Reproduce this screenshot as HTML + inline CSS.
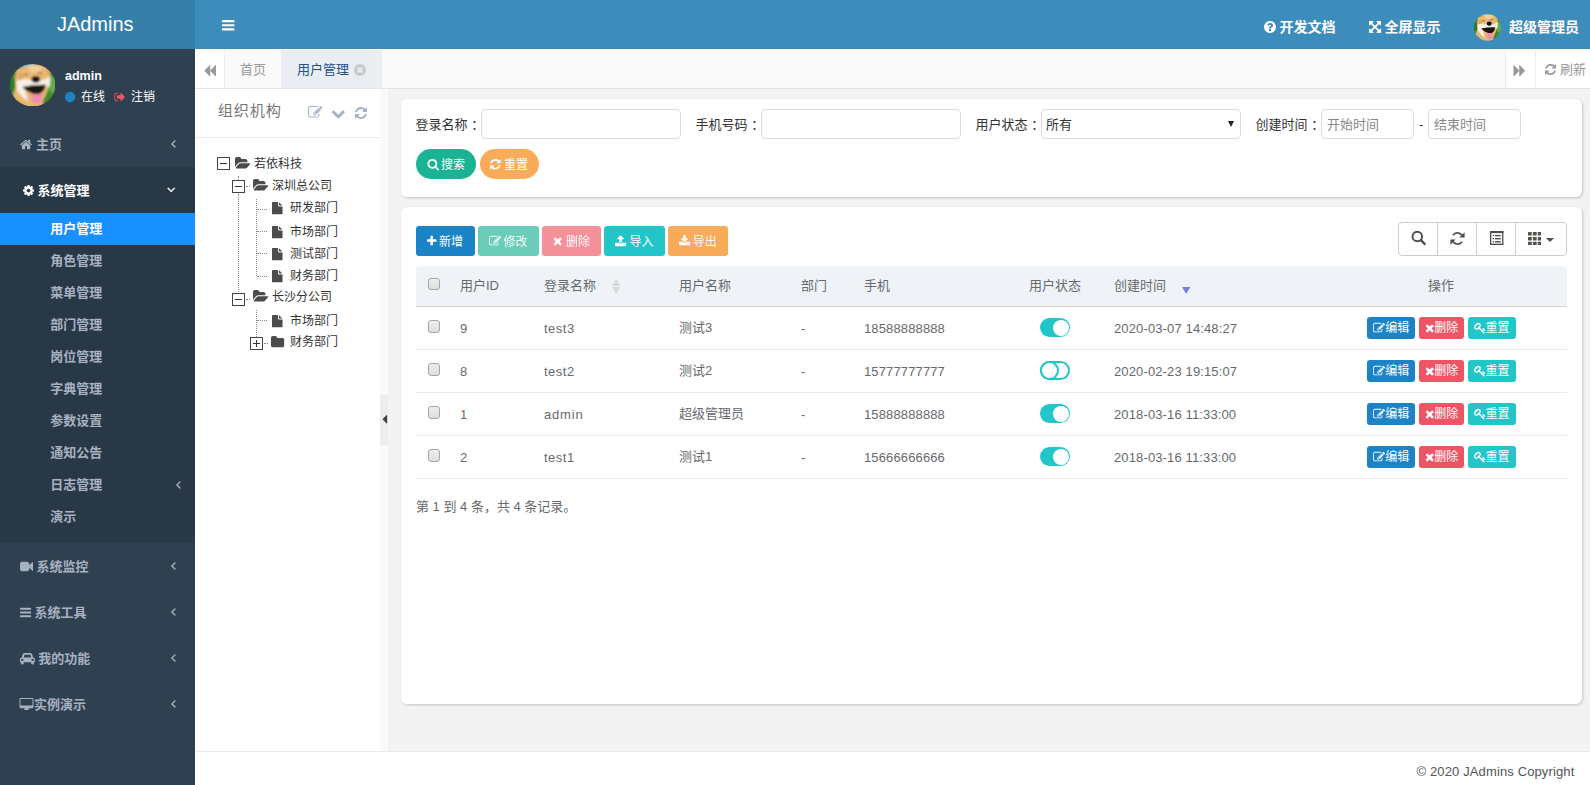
<!DOCTYPE html>
<html lang="zh-CN"><head><meta charset="utf-8"><title>JAdmins</title>
<style>
*{box-sizing:border-box;margin:0;padding:0}
html,body{width:1590px;height:785px;overflow:hidden;background:#f3f3f4}
body{font-family:"Liberation Sans","Noto Sans CJK SC",sans-serif;font-size:13px;color:#676a6c;position:relative}
.a{position:absolute}
.t{position:absolute;white-space:nowrap;line-height:20px;height:20px}
svg.i{display:block;position:absolute}
.b{font-weight:bold}
.n{letter-spacing:.13px;margin-top:.5px}
#side{left:0;top:0;width:195px;height:785px;background:#2f4050}
#logo{left:0;top:0;width:195px;padding-right:4.5px;height:49px;background:#367fa9;color:#fff;font-size:20px;line-height:49px;text-align:center}
#nav{left:195px;top:0;width:1395px;height:49px;background:#3c8dbc}
#tabs{left:195px;top:49px;width:1395px;height:40px;background:#fafafa;border-bottom:1px solid #e4e4e4}
#left{left:195px;top:89px;width:185px;height:662px;background:#fff}
#split{left:380px;top:89px;width:8px;height:662px;background:#fafafa}
#foot{left:195px;top:751px;width:1395px;height:34px;background:#fff;border-top:1px solid #e7eaec}
.card{background:#fff;border-radius:6px;box-shadow:1px 1px 3px rgba(0,0,0,.2)}
.inp{position:absolute;height:30px;border:1px solid #ddd;border-radius:4px;background:#fff}
.btn{position:absolute;height:30px;color:#fff;border-radius:3px}
.m1{color:#a7b1c2;font-weight:bold}
.m2{color:#a7b1c2;font-weight:bold}
.tree{color:#333;font-size:12px}
.cb{position:absolute;width:12.5px;height:12.5px;border:1px solid #a6a6a6;border-radius:3px;background:linear-gradient(#ededed,#dedede)}
.hline{position:absolute;height:1px;left:416px;width:1151px;background:#e7eaec}
.sw{position:absolute;width:30px;height:19px;border-radius:10px;background:#23c6c8}
.sw i{position:absolute;top:1.5px;right:1.5px;width:16px;height:16px;border-radius:50%;background:#fff}
.sw.off{background:#fff;border:2px solid #23c6c8}
.sw.off i{left:-2px;top:-2px;width:19px;height:19px;background:#fff;border:2px solid #23c6c8}
.ab{position:absolute;height:22px;border-radius:3px;color:#fff;font-size:12px}
.dot{position:absolute;border:0 dotted #8a8a8a}
.pm{position:absolute;width:13px;height:13px;border:1px solid #444;background:#fff}
.pm:before{content:"";position:absolute;left:2px;top:5px;width:7px;height:1px;background:#333}
.pm.plus:after{content:"";position:absolute;left:5px;top:2px;width:1px;height:7px;background:#333}
</style></head>
<body>
<div class="a" id="side"></div>
<div class="a" id="logo">JAdmins</div>
<svg class="i" style="left:9.8px;top:63.6px" width="45.4" height="42.4" viewBox="0 0 660 610" preserveAspectRatio="none"><defs><clipPath id="c32"><ellipse cx="330" cy="305" rx="330" ry="305"/></clipPath><filter id="f32" x="-5%" y="-5%" width="110%" height="110%"><feGaussianBlur stdDeviation="13"/></filter></defs><g clip-path="url(#c32)"><g filter="url(#f32)"><rect x="-40" y="-40" width="740" height="690" fill="#3f8a2c"/><ellipse cx="620" cy="300" rx="60" ry="120" fill="#5fae48"/><ellipse cx="40" cy="300" rx="50" ry="110" fill="#2f7a22"/><rect x="130" y="-20" width="230" height="60" fill="#86bdea"/><path d="M90 115 L108 70 L150 62 L250 25 L400 8 L500 28 L548 58 L572 98 L588 200 L578 300 L525 430 L482 520 L470 640 L150 640 L40 480 L80 330 L74 200z" fill="#e9b873"/><path d="M250 30 L400 12 L480 40 L430 110 L300 120z" fill="#f2cf98"/><path d="M88 250 Q180 195 300 230 Q380 250 470 235 Q540 205 584 180 L580 310 Q545 350 470 335 L210 335 Q235 430 262 540 Q170 480 105 380z" fill="#f6f0e6"/><ellipse cx="150" cy="180" rx="40" ry="50" fill="#dfa75c"/><ellipse cx="560" cy="120" rx="30" ry="40" fill="#dfa75c"/><path d="M100 500 L200 600 L120 640 L40 560z" fill="#d9a055"/><path d="M178 332 Q330 296 522 300 Q505 420 400 442 Q262 424 178 332z" fill="#1f1311"/><path d="M305 447 Q390 424 470 440 L466 520 Q450 582 390 577 Q330 570 320 520z" fill="#f08dab"/><ellipse cx="375" cy="220" rx="62" ry="48" fill="#17100f"/><path d="M200 160 q32 -22 62 0" stroke="#4a3220" stroke-width="14" fill="none"/><path d="M405 135 q32 -22 62 0" stroke="#4a3220" stroke-width="14" fill="none"/></g></g></svg>
<div class="t b" style="left:65px;top:65.5px;color:#fff;font-size:12.5px">admin</div>
<svg class="i" width="10.29" height="12.00" viewBox="0 0 1536 1792" style="left:64.6px;top:90.5px;overflow:visible"><path fill="#1c84c6" d="M1536 896q0 209-103 385.500t-279.500 279.500-385.500 103-385.500-103-279.500-279.500-103-385.500 103-385.500 279.500-279.500 385.500-103 385.500 103 279.500 279.500 103 385.500z"/></svg>
<div class="t " style="left:81px;top:87px;color:#fff;font-size:12px">在线</div>
<svg class="i" width="11.14" height="12.00" viewBox="0 0 1664 1792" style="left:113.8px;top:90.5px;overflow:visible"><path fill="#ed5565" d="M704 1440q0 4 1 20t.5 26.500-3 23.500-10 19.500-20.500 6.500h-320q-119 0-203.500-84.500t-84.500-203.500v-704q0-119 84.500-203.500t203.500-84.500h320q13 0 22.500 9.500t9.500 22.500q0 4 1 20t.5 26.500-3 23.500-10 19.500-20.500 6.500h-320q-66 0-113 47t-47 113v704q0 66 47 113t113 47h312l11.500 1 11.500 3 8 5.500 7 9 2 13.500zm928-544q0 26-19 45l-544 544q-19 19-45 19t-45-19-19-45v-288h-448q-26 0-45-19t-19-45v-384q0-26 19-45t45-19h448v-288q0-26 19-45t45-19 45 19l544 544q19 19 19 45z"/></svg>
<div class="t " style="left:131px;top:87px;color:#fff;font-size:12px">注销</div>
<div class="a" style="left:0;top:167px;width:195px;height:376px;background:#293846"></div>
<div class="a" style="left:0;top:213px;width:195px;height:32px;background:#1890ff"></div>
<svg class="i" width="12.07" height="13.00" viewBox="0 0 1664 1792" style="left:20px;top:137.5px;overflow:visible"><path fill="#a7b1c2" d="M1408 992v480q0 26-19 45t-45 19h-384v-384h-256v384h-384q-26 0-45-19t-19-45v-480q0-1 .5-3t.5-3l575-474 575 474q1 2 1 6zm223-69l-62 74q-8 9-21 11h-3q-13 0-21-7l-692-577-692 577q-12 8-24 7-13-2-21-11l-62-74q-8-10-7-23.500t11-21.500l719-599q32-26 76-26t76 26l244 204v-195q0-14 9-23t23-9h192q14 0 23 9t9 23v408l219 182q10 8 11 21.500t-7 23.500z"/></svg>
<div class="t m1" style="left:36px;top:134.8px;">主页</div>
<svg class="i" width="4.64" height="13.00" viewBox="0 0 640 1792" style="left:170.6px;top:136.5px;overflow:visible;stroke:#a7b1c2;stroke-width:70"><path fill="#a7b1c2" d="M627 544q0 13-10 23l-393 393 393 393q10 10 10 23t-10 23l-50 50q-10 10-23 10t-23-10l-466-466q-10-10-10-23t10-23l466-466q10-10 23-10t23 10l50 50q10 10 10 23z"/></svg>
<svg class="i" width="11.14" height="13.00" viewBox="0 0 1536 1792" style="left:23px;top:183.5px;overflow:visible"><path fill="#fff" d="M1024 896q0-106-75-181t-181-75-181 75-75 181 75 181 181 75 181-75 75-181zm512-109v222q0 12-8 23t-20 13l-185 28q-19 54-39 91 35 50 107 138 10 12 10 25t-9 23q-27 37-99 108t-94 71q-12 0-26-9l-138-108q-44 23-91 38-16 136-29 186-7 28-36 28h-222q-14 0-24.500-8.500t-11.500-21.500l-28-184q-49-16-90-37l-141 107q-10 9-25 9-14 0-25-11-126-114-165-168-7-10-7-23 0-12 8-23 15-21 51-66.500t54-70.500q-27-50-41-99l-183-27q-13-2-21-12.500t-8-23.500v-222q0-12 8-23t19-13l186-28q14-46 39-92-40-57-107-138-10-12-10-24 0-10 9-23 26-36 98.500-107.500t94.500-71.500q13 0 26 10l138 107q44-23 91-38 16-136 29-186 7-28 36-28h222q14 0 24.500 8.500t11.500 21.500l28 184q49 16 90 37l142-107q9-9 24-9 13 0 25 10 129 119 165 170 7 8 7 22 0 12-8 23-15 21-51 66.500t-54 70.500q26 50 41 98l183 28q13 2 21 12.500t8 23.500z"/></svg>
<div class="t m1" style="left:37.5px;top:180.9px;color:#fff">系统管理</div>
<svg class="i" width="8.36" height="13.00" viewBox="0 0 1152 1792" style="left:167px;top:182.5px;overflow:visible;stroke:#fff;stroke-width:70"><path fill="#fff" d="M1075 736q0 13-10 23l-466 466q-10 10-23 10t-23-10l-466-466q-10-10-10-23t10-23l50-50q10-10 23-10t23 10l393 393 393-393q10-10 23-10t23 10l50 50q10 10 10 23z"/></svg>
<div class="t m2" style="left:50.3px;top:219.1px;color:#fff">用户管理</div>
<div class="t m2" style="left:50.3px;top:251.1px;">角色管理</div>
<div class="t m2" style="left:50.3px;top:283.1px;">菜单管理</div>
<div class="t m2" style="left:50.3px;top:315.1px;">部门管理</div>
<div class="t m2" style="left:50.3px;top:347.1px;">岗位管理</div>
<div class="t m2" style="left:50.3px;top:379.1px;">字典管理</div>
<div class="t m2" style="left:50.3px;top:411.1px;">参数设置</div>
<div class="t m2" style="left:50.3px;top:443.1px;">通知公告</div>
<div class="t m2" style="left:50.3px;top:475.1px;">日志管理</div>
<div class="t m2" style="left:50.3px;top:507.1px;">演示</div>
<svg class="i" width="4.64" height="13.00" viewBox="0 0 640 1792" style="left:175.5px;top:477.5px;overflow:visible;stroke:#a7b1c2;stroke-width:70"><path fill="#a7b1c2" d="M627 544q0 13-10 23l-393 393 393 393q10 10 10 23t-10 23l-50 50q-10 10-23 10t-23-10l-466-466q-10-10-10-23t10-23l466-466q10-10 23-10t23 10l50 50q10 10 10 23z"/></svg>
<svg class="i" width="13.00" height="13.00" viewBox="0 0 1792 1792" style="left:20px;top:559.5px;overflow:visible"><path fill="#a7b1c2" d="M1792 352v1088q0 42-39 59-13 5-25 5-27 0-45-19l-403-403v166q0 119-84.500 203.500t-203.500 84.500h-704q-119 0-203.500-84.500t-84.500-203.500v-704q0-119 84.500-203.500t203.500-84.500h704q119 0 203.500 84.500t84.500 203.500v165l403-402q18-19 45-19 12 0 25 5 39 17 39 59z"/></svg>
<div class="t m1" style="left:36.5px;top:556.8px;">系统监控</div>
<svg class="i" width="4.64" height="13.00" viewBox="0 0 640 1792" style="left:170.6px;top:558.5px;overflow:visible;stroke:#a7b1c2;stroke-width:70"><path fill="#a7b1c2" d="M627 544q0 13-10 23l-393 393 393 393q10 10 10 23t-10 23l-50 50q-10 10-23 10t-23-10l-466-466q-10-10-10-23t10-23l466-466q10-10 23-10t23 10l50 50q10 10 10 23z"/></svg>
<svg class="i" width="11.14" height="13.00" viewBox="0 0 1536 1792" style="left:20px;top:605.5px;overflow:visible"><path fill="#a7b1c2" d="M1536 1344v128q0 26-19 45t-45 19h-1408q-26 0-45-19t-19-45v-128q0-26 19-45t45-19h1408q26 0 45 19t19 45zm0-512v128q0 26-19 45t-45 19h-1408q-26 0-45-19t-19-45v-128q0-26 19-45t45-19h1408q26 0 45 19t19 45zm0-512v128q0 26-19 45t-45 19h-1408q-26 0-45-19t-19-45v-128q0-26 19-45t45-19h1408q26 0 45 19t19 45z"/></svg>
<div class="t m1" style="left:34.4px;top:602.8px;">系统工具</div>
<svg class="i" width="4.64" height="13.00" viewBox="0 0 640 1792" style="left:170.6px;top:604.5px;overflow:visible;stroke:#a7b1c2;stroke-width:70"><path fill="#a7b1c2" d="M627 544q0 13-10 23l-393 393 393 393q10 10 10 23t-10 23l-50 50q-10 10-23 10t-23-10l-466-466q-10-10-10-23t10-23l466-466q10-10 23-10t23 10l50 50q10 10 10 23z"/></svg>
<svg class="i" width="14.86" height="13.00" viewBox="0 0 2048 1792" style="left:20px;top:651.5px;overflow:visible"><path fill="#a7b1c2" d="M480 1088q0-66-47-113t-113-47-113 47-47 113 47 113 113 47 113-47 47-113zm36-320h1016l-89-357q-2-8-14-17.500t-21-9.500h-768q-9 0-21 9.500t-14 17.500zm1372 320q0-66-47-113t-113-47-113 47-47 113 47 113 113 47 113-47 47-113zm160-96v384q0 14-9 23t-23 9h-96v128q0 80-56 136t-136 56-136-56-56-136v-128h-1024v128q0 80-56 136t-136 56-136-56-56-136v-128h-96q-14 0-23-9t-9-23v-384q0-93 65.500-158.500t158.500-65.500h28l105-419q23-94 104-157.500t179-63.500h768q98 0 179 63.500t104 157.500l105 419h28q93 0 158.500 65.500t65.500 158.500z"/></svg>
<div class="t m1" style="left:38.3px;top:648.8px;">我的功能</div>
<svg class="i" width="4.64" height="13.00" viewBox="0 0 640 1792" style="left:170.6px;top:650.5px;overflow:visible;stroke:#a7b1c2;stroke-width:70"><path fill="#a7b1c2" d="M627 544q0 13-10 23l-393 393 393 393q10 10 10 23t-10 23l-50 50q-10 10-23 10t-23-10l-466-466q-10-10-10-23t10-23l466-466q10-10 23-10t23 10l50 50q10 10 10 23z"/></svg>
<svg class="i" width="13.93" height="13.00" viewBox="0 0 1920 1792" style="left:20px;top:697.5px;overflow:visible"><path fill="#a7b1c2" d="M1728 992v-832q0-13-9.500-22.500t-22.500-9.500h-1600q-13 0-22.500 9.500t-9.500 22.500v832q0 13 9.500 22.500t22.500 9.500h1600q13 0 22.500-9.500t9.500-22.500zm128-832v1088q0 66-47 113t-113 47h-544q0 37 16 77.500t32 71 16 43.500q0 26-19 45t-45 19h-512q-26 0-45-19t-19-45q0-14 16-44t32-70 16-78h-544q-66 0-113-47t-47-113v-1088q0-66 47-113t113-47h1600q66 0 113 47t47 113z"/></svg>
<div class="t m1" style="left:33.9px;top:694.8px;">实例演示</div>
<svg class="i" width="4.64" height="13.00" viewBox="0 0 640 1792" style="left:170.6px;top:696.5px;overflow:visible;stroke:#a7b1c2;stroke-width:70"><path fill="#a7b1c2" d="M627 544q0 13-10 23l-393 393 393 393q10 10 10 23t-10 23l-50 50q-10 10-23 10t-23-10l-466-466q-10-10-10-23t10-23l466-466q10-10 23-10t23 10l50 50q10 10 10 23z"/></svg>
<div class="a" id="nav"></div>
<svg class="i" width="12.43" height="14.50" viewBox="0 0 1536 1792" style="left:221.5px;top:18.25px;overflow:visible"><path fill="#fff" d="M1536 1344v128q0 26-19 45t-45 19h-1408q-26 0-45-19t-19-45v-128q0-26 19-45t45-19h1408q26 0 45 19t19 45zm0-512v128q0 26-19 45t-45 19h-1408q-26 0-45-19t-19-45v-128q0-26 19-45t45-19h1408q26 0 45 19t19 45zm0-512v128q0 26-19 45t-45 19h-1408q-26 0-45-19t-19-45v-128q0-26 19-45t45-19h1408q26 0 45 19t19 45z"/></svg>
<svg class="i" width="12.00" height="14.00" viewBox="0 0 1536 1792" style="left:1264px;top:20px;overflow:visible"><path fill="#fff" d="M896 1376v-192q0-14-9-23t-23-9h-192q-14 0-23 9t-9 23v192q0 14 9 23t23 9h192q14 0 23-9t9-23zm256-672q0-88-55.500-163t-138.500-116-170-41q-243 0-371 213-15 24 8 42l132 100q7 6 19 6 16 0 25-12 53-68 86-92 34-24 86-24 48 0 85.500 26t37.500 59q0 38-20 61t-68 45q-63 28-115.500 86.500t-52.500 125.500v36q0 14 9 23t23 9h192q14 0 23-9t9-23q0-19 21.500-49.500t54.500-49.500q32-18 49-28.500t46-35 44.500-48 28-60.500 12.500-81zm384 192q0 209-103 385.500t-279.500 279.500-385.500 103-385.500-103-279.500-279.500-103-385.500 103-385.500 279.500-279.500 385.500-103 385.500 103 279.500 279.500 103 385.500z"/></svg>
<div class="t b" style="left:1279.5px;top:16.7px;color:#fff;font-size:14px">开发文档</div>
<svg class="i" width="14.00" height="14.00" viewBox="0 0 1792 1792" style="left:1367.8px;top:20px;overflow:visible"><path fill="#fff" d="M1411 541l-355 355 355 355 144-144q29-31 70-14 39 17 39 59v448q0 26-19 45t-45 19h-448q-42 0-59-40-17-39 14-69l144-144-355-355-355 355 144 144q31 30 14 69-17 40-59 40h-448q-26 0-45-19t-19-45v-448q0-42 40-59 39-17 69 14l144 144 355-355-355-355-144 144q-19 19-45 19-12 0-24-5-40-17-40-59v-448q0-26 19-45t45-19h448q42 0 59 40 17 39-14 69l-144 144 355 355 355-355-144-144q-31-30-14-69 17-40 59-40h448q26 0 45 19t19 45v448q0 42-39 59-13 5-25 5-26 0-45-19z"/></svg>
<div class="t b" style="left:1384.5px;top:16.7px;color:#fff;font-size:14px">全屏显示</div>
<svg class="i" style="left:1473.9px;top:13.9px" width="26.8" height="26.8" viewBox="0 0 660 610" preserveAspectRatio="none"><defs><clipPath id="c1487"><ellipse cx="330" cy="305" rx="330" ry="305"/></clipPath><filter id="f1487" x="-5%" y="-5%" width="110%" height="110%"><feGaussianBlur stdDeviation="13"/></filter></defs><g clip-path="url(#c1487)"><g filter="url(#f1487)"><rect x="-40" y="-40" width="740" height="690" fill="#3f8a2c"/><ellipse cx="620" cy="300" rx="60" ry="120" fill="#5fae48"/><ellipse cx="40" cy="300" rx="50" ry="110" fill="#2f7a22"/><rect x="130" y="-20" width="230" height="60" fill="#86bdea"/><path d="M90 115 L108 70 L150 62 L250 25 L400 8 L500 28 L548 58 L572 98 L588 200 L578 300 L525 430 L482 520 L470 640 L150 640 L40 480 L80 330 L74 200z" fill="#e9b873"/><path d="M250 30 L400 12 L480 40 L430 110 L300 120z" fill="#f2cf98"/><path d="M88 250 Q180 195 300 230 Q380 250 470 235 Q540 205 584 180 L580 310 Q545 350 470 335 L210 335 Q235 430 262 540 Q170 480 105 380z" fill="#f6f0e6"/><ellipse cx="150" cy="180" rx="40" ry="50" fill="#dfa75c"/><ellipse cx="560" cy="120" rx="30" ry="40" fill="#dfa75c"/><path d="M100 500 L200 600 L120 640 L40 560z" fill="#d9a055"/><path d="M178 332 Q330 296 522 300 Q505 420 400 442 Q262 424 178 332z" fill="#1f1311"/><path d="M305 447 Q390 424 470 440 L466 520 Q450 582 390 577 Q330 570 320 520z" fill="#f08dab"/><ellipse cx="375" cy="220" rx="62" ry="48" fill="#17100f"/><path d="M200 160 q32 -22 62 0" stroke="#4a3220" stroke-width="14" fill="none"/><path d="M405 135 q32 -22 62 0" stroke="#4a3220" stroke-width="14" fill="none"/></g></g></svg>
<div class="t b" style="left:1509px;top:16.7px;color:#fff;font-size:14px">超级管理员</div>
<div class="a" id="tabs"></div>
<div class="a" style="left:195px;top:49px;width:29px;height:39px;background:#fff"></div>
<div class="a" style="left:1505px;top:49px;width:85px;height:39px;background:#fff"></div>
<div class="a" style="left:224px;top:50px;width:1px;height:38px;background:#eee"></div>
<svg class="i" width="13.50" height="13.50" viewBox="0 0 1792 1792" style="left:203.3px;top:63.65px;overflow:visible"><path fill="#999" d="M1683 141q19-19 32-13t13 32v1472q0 26-13 32t-32-13l-710-710q-9-9-13-19v710q0 26-13 32t-32-13l-710-710q-19-19-19-45t19-45l710-710q19-19 32-13t13 32v710q4-10 13-19z"/></svg>
<div class="t " style="left:240px;top:60px;color:#999">首页</div>
<div class="a" style="left:281px;top:50px;width:101px;height:38px;background:#eaedf1"></div>
<div class="t " style="left:297px;top:60px;color:#23508e">用户管理</div>
<svg class="i" width="12.00" height="14.00" viewBox="0 0 1536 1792" style="left:354px;top:62.5px;overflow:visible"><path fill="#c8c8c8" d="M1149 1122q0-26-19-45l-181-181 181-181q19-19 19-45 0-27-19-46l-90-90q-19-19-46-19-26 0-45 19l-181 181-181-181q-19-19-45-19-27 0-46 19l-90 90q-19 19-19 46 0 26 19 45l181 181-181 181q-19 19-19 45 0 27 19 46l90 90q19 19 46 19 26 0 45-19l181-181 181 181q19 19 45 19 27 0 46-19l90-90q19-19 19-46zm387-226q0 209-103 385.500t-279.500 279.500-385.500 103-385.500-103-279.500-279.500-103-385.500 103-385.500 279.500-279.500 385.500-103 385.500 103 279.500 279.500 103 385.500z"/></svg>
<div class="a" style="left:1505px;top:50px;width:1px;height:38px;background:#eee"></div>
<div class="a" style="left:1535px;top:50px;width:1px;height:38px;background:#eee"></div>
<svg class="i" width="13.50" height="13.50" viewBox="0 0 1792 1792" style="left:1513.4px;top:63.55px;overflow:visible"><path fill="#999" d="M109 1651q-19 19-32 13t-13-32v-1472q0-26 13-32t32 13l710 710q9 9 13 19v-710q0-26 13-32t32 13l710 710q19 19 19 45t-19 45l-710 710q-19 19-32 13t-13-32v-710q-4 10-13 19z"/></svg>
<svg class="i" width="11.14" height="13.00" viewBox="0 0 1536 1792" style="left:1545px;top:63px;overflow:visible"><path fill="#999" d="M1511 1056q0 5-1 7-64 268-268 434.500t-478 166.500q-146 0-282.500-55t-243.500-157l-129 129q-19 19-45 19t-45-19-19-45v-448q0-26 19-45t45-19h448q26 0 45 19t19 45-19 45l-137 137q71 66 161 102t187 36q134 0 250-65t186-179q11-17 53-117 8-23 30-23h192q13 0 22.500 9.500t9.500 22.500zm25-800v448q0 26-19 45t-45 19h-448q-26 0-45-19t-19-45 19-45l138-138q-148-137-349-137-134 0-250 65t-186 179q-11 17-53 117-8 23-30 23h-199q-13 0-22.500-9.500t-9.500-22.500v-7q65-268 270-434.500t480-166.500q146 0 284 55.500t245 156.500l130-129q19-19 45-19t45 19 19 45z"/></svg>
<div class="t " style="left:1560px;top:60px;color:#999">刷新</div>
<div class="a" id="left"></div>
<div class="a" id="split"></div>
<div class="a" style="left:380px;top:395px;width:8px;height:50px;background:#ededed"></div>
<svg class="i" width="5.18" height="14.50" viewBox="0 0 640 1792" style="left:381.6px;top:412.25px;overflow:visible"><path fill="#444" d="M640 448v896q0 26-19 45t-45 19-45-19l-448-448q-19-19-19-45t19-45l448-448q19-19 45-19t45 19 19 45z"/></svg>
<div class="t " style="left:217.7px;top:101.4px;font-size:15.2px;letter-spacing:.8px;color:#777">组织机构</div>
<svg class="i" width="14.50" height="14.50" viewBox="0 0 1792 1792" style="left:308px;top:105.25px;overflow:visible"><path fill="#a7b1c2" d="M888 1184l116-116-152-152-116 116v56h96v96h56zm440-720q-16-16-33 1l-350 350q-17 17-1 33t33-1l350-350q17-17 1-33zm80 594v190q0 119-84.500 203.500t-203.500 84.500h-832q-119 0-203.500-84.500t-84.500-203.500v-832q0-119 84.500-203.500t203.500-84.500h832q63 0 117 25 15 7 18 23 3 17-9 29l-49 49q-14 14-32 8-23-6-45-6h-832q-66 0-113 47t-47 113v832q0 66 47 113t113 47h832q66 0 113-47t47-113v-126q0-13 9-22l64-64q15-15 35-7t20 29zm-96-738l288 288-672 672h-288v-288zm444 132l-92 92-288-288 92-92q28-28 68-28t68 28l152 152q28 28 28 68t-28 68z"/></svg>
<svg class="i" width="14.50" height="14.50" viewBox="0 0 1792 1792" style="left:331px;top:105.95px;overflow:visible"><path fill="#a7b1c2" d="M1683 808l-742 741q-19 19-45 19t-45-19l-742-741q-19-19-19-45.500t19-45.500l166-165q19-19 45-19t45 19l531 531 531-531q19-19 45-19t45 19l166 165q19 19 19 45.500t-19 45.500z"/></svg>
<svg class="i" width="12.00" height="14.00" viewBox="0 0 1536 1792" style="left:355px;top:105.5px;overflow:visible"><path fill="#a7b1c2" d="M1511 1056q0 5-1 7-64 268-268 434.500t-478 166.500q-146 0-282.500-55t-243.500-157l-129 129q-19 19-45 19t-45-19-19-45v-448q0-26 19-45t45-19h448q26 0 45 19t19 45-19 45l-137 137q71 66 161 102t187 36q134 0 250-65t186-179q11-17 53-117 8-23 30-23h192q13 0 22.500 9.500t9.500 22.500zm25-800v448q0 26-19 45t-45 19h-448q-26 0-45-19t-19-45 19-45l138-138q-148-137-349-137-134 0-250 65t-186 179q-11 17-53 117-8 23-30 23h-199q-13 0-22.500-9.500t-9.500-22.500v-7q65-268 270-434.500t480-166.500q146 0 284 55.500t245 156.500l130-129q19-19 45-19t45 19 19 45z"/></svg>
<div class="a" style="left:195px;top:137px;width:185px;height:1px;background:#e7eaec"></div>
<div class="dot" style="left:238px;top:176px;width:0;height:4px;border-left-width:1px"></div>
<div class="dot" style="left:238px;top:194px;width:0;height:98px;border-left-width:1px"></div>
<div class="dot" style="left:246px;top:186px;width:4px;height:0;border-top-width:1px"></div>
<div class="dot" style="left:246px;top:299px;width:4px;height:0;border-top-width:1px"></div>
<div class="dot" style="left:256px;top:199px;width:0;height:77px;border-left-width:1px"></div>
<div class="dot" style="left:256px;top:310px;width:0;height:27px;border-left-width:1px"></div>
<div class="dot" style="left:257px;top:209px;width:10px;height:0;border-top-width:1px"></div>
<div class="dot" style="left:257px;top:231px;width:10px;height:0;border-top-width:1px"></div>
<div class="dot" style="left:257px;top:253px;width:10px;height:0;border-top-width:1px"></div>
<div class="dot" style="left:257px;top:276px;width:10px;height:0;border-top-width:1px"></div>
<div class="dot" style="left:257px;top:320px;width:10px;height:0;border-top-width:1px"></div>
<div class="dot" style="left:264px;top:343px;width:4px;height:0;border-top-width:1px"></div>
<div class="pm" style="left:217px;top:157px"></div>
<svg class="i" width="15.54" height="14.50" viewBox="0 0 1920 1792" style="left:234.8px;top:156.15px;overflow:visible"><path fill="#4c4c4c" d="M1879 952q0 31-31 66l-336 396q-43 51-120.500 86.500t-143.500 35.500h-1088q-34 0-60.500-13t-26.500-43q0-31 31-66l336-396q43-51 120.500-86.500t143.500-35.500h1088q34 0 60.500 13t26.500 43zm-343-344v160h-832q-94 0-197 47.500t-164 119.500l-337 396-5 6q0-4-.5-12.500t-.5-12.500v-960q0-92 66-158t158-66h320q92 0 158 66t66 158v32h544q92 0 158 66t66 158z"/></svg>
<div class="t tree" style="left:254px;top:154.4px;">若依科技</div>
<div class="pm" style="left:232px;top:180px"></div>
<svg class="i" width="15.54" height="14.50" viewBox="0 0 1920 1792" style="left:252.7px;top:178.15px;overflow:visible"><path fill="#4c4c4c" d="M1879 952q0 31-31 66l-336 396q-43 51-120.500 86.500t-143.500 35.500h-1088q-34 0-60.500-13t-26.500-43q0-31 31-66l336-396q43-51 120.500-86.500t143.500-35.500h1088q34 0 60.500 13t26.500 43zm-343-344v160h-832q-94 0-197 47.500t-164 119.500l-337 396-5 6q0-4-.5-12.500t-.5-12.500v-960q0-92 66-158t158-66h320q92 0 158 66t66 158v32h544q92 0 158 66t66 158z"/></svg>
<div class="t tree" style="left:272px;top:176.4px;">深圳总公司</div>
<svg class="i" width="10.54" height="12.30" viewBox="0 0 1536 1792" style="left:272.1px;top:202.45px;overflow:visible"><path fill="#4c4c4c" d="M1024 512v-472q22 14 36 28l408 408q14 14 28 36h-472zm-128 32q0 40 28 68t68 28h544v1056q0 40-28 68t-68 28h-1344q-40 0-68-28t-28-68v-1600q0-40 28-68t68-28h800v544z"/></svg>
<div class="t tree" style="left:290px;top:198.4px;">研发部门</div>
<svg class="i" width="10.54" height="12.30" viewBox="0 0 1536 1792" style="left:272.1px;top:225.85px;overflow:visible"><path fill="#4c4c4c" d="M1024 512v-472q22 14 36 28l408 408q14 14 28 36h-472zm-128 32q0 40 28 68t68 28h544v1056q0 40-28 68t-68 28h-1344q-40 0-68-28t-28-68v-1600q0-40 28-68t68-28h800v544z"/></svg>
<div class="t tree" style="left:290px;top:221.8px;">市场部门</div>
<svg class="i" width="10.54" height="12.30" viewBox="0 0 1536 1792" style="left:272.1px;top:248.05px;overflow:visible"><path fill="#4c4c4c" d="M1024 512v-472q22 14 36 28l408 408q14 14 28 36h-472zm-128 32q0 40 28 68t68 28h544v1056q0 40-28 68t-68 28h-1344q-40 0-68-28t-28-68v-1600q0-40 28-68t68-28h800v544z"/></svg>
<div class="t tree" style="left:290px;top:244px;">测试部门</div>
<svg class="i" width="10.54" height="12.30" viewBox="0 0 1536 1792" style="left:272.1px;top:269.55px;overflow:visible"><path fill="#4c4c4c" d="M1024 512v-472q22 14 36 28l408 408q14 14 28 36h-472zm-128 32q0 40 28 68t68 28h544v1056q0 40-28 68t-68 28h-1344q-40 0-68-28t-28-68v-1600q0-40 28-68t68-28h800v544z"/></svg>
<div class="t tree" style="left:290px;top:265.5px;">财务部门</div>
<div class="pm" style="left:232px;top:293px"></div>
<svg class="i" width="15.54" height="14.50" viewBox="0 0 1920 1792" style="left:252.7px;top:289.25px;overflow:visible"><path fill="#4c4c4c" d="M1879 952q0 31-31 66l-336 396q-43 51-120.500 86.500t-143.500 35.500h-1088q-34 0-60.500-13t-26.500-43q0-31 31-66l336-396q43-51 120.500-86.500t143.500-35.500h1088q34 0 60.500 13t26.500 43zm-343-344v160h-832q-94 0-197 47.500t-164 119.500l-337 396-5 6q0-4-.5-12.500t-.5-12.500v-960q0-92 66-158t158-66h320q92 0 158 66t66 158v32h544q92 0 158 66t66 158z"/></svg>
<div class="t tree" style="left:272px;top:287.4px;">长沙分公司</div>
<svg class="i" width="10.54" height="12.30" viewBox="0 0 1536 1792" style="left:272.1px;top:314.55px;overflow:visible"><path fill="#4c4c4c" d="M1024 512v-472q22 14 36 28l408 408q14 14 28 36h-472zm-128 32q0 40 28 68t68 28h544v1056q0 40-28 68t-68 28h-1344q-40 0-68-28t-28-68v-1600q0-40 28-68t68-28h800v544z"/></svg>
<div class="t tree" style="left:290px;top:310.8px;">市场部门</div>
<div class="pm plus" style="left:250px;top:337px"></div>
<svg class="i" width="13.19" height="14.20" viewBox="0 0 1664 1792" style="left:271.1px;top:334.9px;overflow:visible"><path fill="#4c4c4c" d="M1664 608v704q0 92-66 158t-158 66h-1216q-92 0-158-66t-66-158v-960q0-92 66-158t158-66h320q92 0 158 66t66 158v32h672q92 0 158 66t66 158z"/></svg>
<div class="t tree" style="left:290px;top:332.4px;">财务部门</div>
<div class="a card" style="left:401px;top:99px;width:1181px;height:97.5px"></div>
<div class="t " style="left:415.5px;top:114.5px;color:#333">登录名称<span style="margin-left:3.7px">：</span></div>
<div class="inp" style="left:481px;top:109px;width:200px"></div>
<div class="t " style="left:695.5px;top:114.5px;color:#333">手机号码<span style="margin-left:3.7px">：</span></div>
<div class="inp" style="left:761px;top:109px;width:200px"></div>
<div class="t " style="left:975.5px;top:114.5px;color:#333">用户状态<span style="margin-left:3.7px">：</span></div>
<div class="inp" style="left:1041px;top:109px;width:200px"></div>
<div class="t " style="left:1046px;top:114.5px;color:#333">所有</div>
<div class="a" style="left:1228px;top:121px;width:0;height:0;border:3.5px solid transparent;border-top:6px solid #222;border-bottom:0"></div>
<div class="t " style="left:1255.5px;top:114.5px;color:#333">创建时间<span style="margin-left:3.7px">：</span></div>
<div class="inp" style="left:1321px;top:109px;width:93px"></div>
<div class="t " style="left:1327px;top:114.5px;color:#888">开始时间</div>
<div class="t " style="left:1419px;top:114.5px;color:#333">-</div>
<div class="inp" style="left:1428px;top:109px;width:93px"></div>
<div class="t " style="left:1434px;top:114.5px;color:#888">结束时间</div>
<div class="btn" style="left:416px;top:149px;width:60px;border-radius:15px;background:#1ab394"></div>
<svg class="i" width="11.61" height="12.50" viewBox="0 0 1664 1792" style="left:427px;top:157.75px;overflow:visible"><path fill="#fff" d="M1216 832q0-185-131.500-316.500t-316.500-131.500-316.500 131.500-131.500 316.500 131.500 316.500 316.500 131.500 316.500-131.500 131.500-316.500zm512 832q0 52-38 90t-90 38q-54 0-90-38l-343-342q-179 124-399 124-143 0-273.500-55.500t-225-150-150-225-55.500-273.500 55.500-273.500 150-225 225-150 273.500-55.500 273.500 55.500 225 150 150 225 55.500 273.500q0 220-124 399l343 343q37 37 37 90z"/></svg>
<div class="t " style="left:441px;top:154.5px;color:#fff;font-size:12px">搜索</div>
<div class="btn" style="left:480px;top:149px;width:59px;border-radius:15px;background:#f8ac59"></div>
<svg class="i" width="10.71" height="12.50" viewBox="0 0 1536 1792" style="left:490px;top:157.75px;overflow:visible"><path fill="#fff" d="M1511 1056q0 5-1 7-64 268-268 434.500t-478 166.500q-146 0-282.500-55t-243.500-157l-129 129q-19 19-45 19t-45-19-19-45v-448q0-26 19-45t45-19h448q26 0 45 19t19 45-19 45l-137 137q71 66 161 102t187 36q134 0 250-65t186-179q11-17 53-117 8-23 30-23h192q13 0 22.500 9.500t9.500 22.500zm25-800v448q0 26-19 45t-45 19h-448q-26 0-45-19t-19-45 19-45l138-138q-148-137-349-137-134 0-250 65t-186 179q-11 17-53 117-8 23-30 23h-199q-13 0-22.500-9.500t-9.500-22.500v-7q65-268 270-434.500t480-166.500q146 0 284 55.500t245 156.500l130-129q19-19 45-19t45 19 19 45z"/></svg>
<div class="t " style="left:504px;top:154.5px;color:#fff;font-size:12px">重置</div>
<div class="a card" style="left:401px;top:207px;width:1181px;height:497px"></div>
<div class="a" style="left:0;top:0;opacity:1">
<div class="btn" style="left:416px;top:226px;width:59px;background:#1c84c6"></div>
<svg class="i" width="9.43" height="12.00" viewBox="0 0 1408 1792" style="left:426.5px;top:235px;overflow:visible"><path fill="#fff" d="M1408 736v192q0 40-28 68t-68 28h-416v416q0 40-28 68t-68 28h-192q-40 0-68-28t-28-68v-416h-416q-40 0-68-28t-28-68v-192q0-40 28-68t68-28h416v-416q0-40 28-68t68-28h192q40 0 68 28t28 68v416h416q40 0 68 28t28 68z"/></svg>
<div class="t " style="left:439px;top:231.5px;color:#fff;font-size:12px">新增</div>
</div>
<div class="a" style="left:0;top:0;opacity:0.65">
<div class="btn" style="left:478px;top:226px;width:61px;background:#1ab394"></div>
<svg class="i" width="12.00" height="12.00" viewBox="0 0 1792 1792" style="left:488.5px;top:235px;overflow:visible"><path fill="#fff" d="M888 1184l116-116-152-152-116 116v56h96v96h56zm440-720q-16-16-33 1l-350 350q-17 17-1 33t33-1l350-350q17-17 1-33zm80 594v190q0 119-84.500 203.500t-203.500 84.500h-832q-119 0-203.500-84.500t-84.500-203.500v-832q0-119 84.500-203.500t203.500-84.500h832q63 0 117 25 15 7 18 23 3 17-9 29l-49 49q-14 14-32 8-23-6-45-6h-832q-66 0-113 47t-47 113v832q0 66 47 113t113 47h832q66 0 113-47t47-113v-126q0-13 9-22l64-64q15-15 35-7t20 29zm-96-738l288 288-672 672h-288v-288zm444 132l-92 92-288-288 92-92q28-28 68-28t68 28l152 152q28 28 28 68t-28 68z"/></svg>
<div class="t " style="left:503.5px;top:231.5px;color:#fff;font-size:12px">修改</div>
</div>
<div class="a" style="left:0;top:0;opacity:0.65">
<div class="btn" style="left:542px;top:226px;width:59px;background:#ed5565"></div>
<svg class="i" width="9.43" height="12.00" viewBox="0 0 1408 1792" style="left:552.5px;top:235px;overflow:visible"><path fill="#fff" d="M1298 1322q0 40-28 68l-136 136q-28 28-68 28t-68-28l-294-294-294 294q-28 28-68 28t-68-28l-136-136q-28-28-28-68t28-68l294-294-294-294q-28-28-28-68t28-68l136-136q28-28 68-28t68 28l294 294 294-294q28-28 68-28t68 28l136 136q28 28 28 68t-28 68l-294 294 294 294q28 28 28 68z"/></svg>
<div class="t " style="left:566px;top:231.5px;color:#fff;font-size:12px">删除</div>
</div>
<div class="a" style="left:0;top:0;opacity:1">
<div class="btn" style="left:604px;top:226px;width:61px;background:#23c6c8"></div>
<svg class="i" width="11.14" height="12.00" viewBox="0 0 1664 1792" style="left:614.5px;top:235px;overflow:visible"><path fill="#fff" d="M1280 1472q0-26-19-45t-45-19-45 19-19 45 19 45 45 19 45-19 19-45zm256 0q0-26-19-45t-45-19-45 19-19 45 19 45 45 19 45-19 19-45zm128-224v320q0 40-28 68t-68 28h-1472q-40 0-68-28t-28-68v-320q0-40 28-68t68-28h427q21 56 70.500 92t110.500 36h256q61 0 110.500-36t70.500-92h427q40 0 68 28t28 68zm-325-648q-17 40-59 40h-256v448q0 26-19 45t-45 19h-256q-26 0-45-19t-19-45v-448h-256q-42 0-59-40-17-39 14-69l448-448q18-19 45-19t45 19l448 448q31 30 14 69z"/></svg>
<div class="t " style="left:629.5px;top:231.5px;color:#fff;font-size:12px">导入</div>
</div>
<div class="a" style="left:0;top:0;opacity:1">
<div class="btn" style="left:668px;top:226px;width:60px;background:#f8ac59"></div>
<svg class="i" width="11.14" height="12.00" viewBox="0 0 1664 1792" style="left:678.5px;top:235px;overflow:visible"><path fill="#fff" d="M1280 1344q0-26-19-45t-45-19-45 19-19 45 19 45 45 19 45-19 19-45zm256 0q0-26-19-45t-45-19-45 19-19 45 19 45 45 19 45-19 19-45zm128-224v320q0 40-28 68t-68 28h-1472q-40 0-68-28t-28-68v-320q0-40 28-68t68-28h465l135 136q58 56 136 56t136-56l136-136h464q40 0 68 28t28 68zm-325-569q17 41-14 70l-448 448q-18 19-45 19t-45-19l-448-448q-31-29-14-70 17-39 59-39h256v-448q0-26 19-45t45-19h256q26 0 45 19t19 45v448h256q42 0 59 39z"/></svg>
<div class="t " style="left:692.8px;top:231.5px;color:#fff;font-size:12px">导出</div>
</div>
<div class="a" style="left:1398px;top:222px;width:169px;height:34px;border:1px solid #ccc;border-radius:4px;background:#fff"></div>
<div class="a" style="left:1437px;top:222px;width:1px;height:34px;background:#ccc"></div>
<div class="a" style="left:1476px;top:222px;width:1px;height:34px;background:#ccc"></div>
<div class="a" style="left:1515px;top:222px;width:1px;height:34px;background:#ccc"></div>
<svg class="i" style="left:1411px;top:230px" width="16" height="16" viewBox="0 0 16 16"><circle cx="6.3" cy="6.5" r="4.8" fill="none" stroke="#4d4d4d" stroke-width="1.9"/><path d="M9.9 10.1L13.7 14" stroke="#4d4d4d" stroke-width="2.4" stroke-linecap="round"/></svg>
<svg class="i" style="left:1449.7px;top:230.6px" width="15" height="15" viewBox="0 0 15 15"><g fill="none" stroke="#4d4d4d" stroke-width="1.55"><path d="M12.7 6.0A5.5 5.5 0 0 0 2.9 4.2"/><path d="M2.3 9.0A5.5 5.5 0 0 0 12.1 10.8"/></g><path fill="#4d4d4d" d="M9.4 6.6h5.2V1.2z M5.6 8.4h-5.2v5.4z"/></svg>
<svg class="i" style="left:1490.2px;top:231px" width="13.4" height="14" viewBox="0 0 13.4 14"><g fill="#4d4d4d"><rect x="0" y="0" width="13.4" height="2.1"/><rect x="0" y="0" width="1.3" height="14"/><rect x="12.1" y="0" width="1.3" height="14"/><rect x="0" y="12.7" width="13.4" height="1.3"/><rect x="2.7" y="3.9" width="1.3" height="1.4"/><rect x="5" y="3.9" width="5.8" height="1.4"/><rect x="2.7" y="7" width="1.3" height="1.4"/><rect x="5" y="7" width="5.8" height="1.4"/><rect x="2.7" y="10.1" width="1.3" height="1.4"/><rect x="5" y="10.1" width="5.8" height="1.4"/></g></svg>
<svg class="i" style="left:1527.8px;top:231.8px" width="13.6" height="13.4" viewBox="0 0 13.6 13.4"><g fill="#55504a"><rect x="0" y="0" width="3.8" height="3.6" rx=".4"/><rect x="4.9" y="0" width="3.8" height="3.6" rx=".4"/><rect x="9.8" y="0" width="3.8" height="3.6" rx=".4"/><rect x="0" y="4.9" width="3.8" height="3.6" rx=".4"/><rect x="4.9" y="4.9" width="3.8" height="3.6" rx=".4"/><rect x="9.8" y="4.9" width="3.8" height="3.6" rx=".4"/><rect x="0" y="9.8" width="3.8" height="3.6" rx=".4"/><rect x="4.9" y="9.8" width="3.8" height="3.6" rx=".4"/><rect x="9.8" y="9.8" width="3.8" height="3.6" rx=".4"/></g></svg>
<div class="a" style="left:1545.9px;top:237.8px;width:0;height:0;border:4.3px solid transparent;border-top:4.8px solid #4d4d4d;border-bottom:0"></div>
<div class="a" style="left:416px;top:266px;width:1151px;height:40.5px;background:#eff3f8;border-radius:4px 4px 0 0"></div>
<div class="a" style="left:416px;top:306px;width:1151px;height:1px;background:#d4d4d4"></div>
<div class="t " style="left:460px;top:276.1px;color:#676a6c">用户ID</div>
<div class="t " style="left:544px;top:276.1px;color:#676a6c">登录名称</div>
<div class="t " style="left:679px;top:276.1px;color:#676a6c">用户名称</div>
<div class="t " style="left:801px;top:276.1px;color:#676a6c">部门</div>
<div class="t " style="left:864px;top:276.1px;color:#676a6c">手机</div>
<div class="t " style="left:1029px;top:276.1px;color:#676a6c">用户状态</div>
<div class="t " style="left:1114px;top:276.1px;color:#676a6c">创建时间</div>
<div class="t " style="left:1428px;top:276.1px;color:#676a6c">操作</div>
<div class="cb" style="left:427.7px;top:277.8px"></div>
<svg class="i" style="left:612.3px;top:279px" width="8.4" height="15" viewBox="0 0 8.4 15"><path fill="#d8d8d8" d="M0 7L4.2 0L8.4 7z"/><path fill="#d8d8d8" d="M0 8L4.2 15L8.4 8z"/></svg>
<svg class="i" style="left:1182.2px;top:287px" width="8.4" height="7" viewBox="0 0 8.4 7"><path fill="#7b7fdb" d="M0 0L4.2 7L8.4 0z"/></svg>
<div class="hline" style="top:349px"></div>
<div class="cb" style="left:427.7px;top:320px"></div>
<div class="t n" style="left:460px;top:318.8px;">9</div>
<div class="t n" style="left:544px;top:318.8px;letter-spacing:0.5px">test3</div>
<div class="t " style="left:679px;top:318.3px;">测试3</div>
<div class="t " style="left:801px;top:318.8px;">-</div>
<div class="t n" style="left:864px;top:318.8px;">18588888888</div>
<div class="t n" style="left:1114px;top:318.8px;">2020-03-07 14:48:27</div>
<div class="sw" style="left:1040px;top:318.1px"><i></i></div>
<div class="ab" style="left:1367px;top:317px;width:48px;background:#1c84c6"></div>
<svg class="i" width="12.00" height="12.00" viewBox="0 0 1792 1792" style="left:1373px;top:322px;overflow:visible"><path fill="#fff" d="M888 1184l116-116-152-152-116 116v56h96v96h56zm440-720q-16-16-33 1l-350 350q-17 17-1 33t33-1l350-350q17-17 1-33zm80 594v190q0 119-84.500 203.500t-203.500 84.500h-832q-119 0-203.500-84.500t-84.500-203.500v-832q0-119 84.500-203.500t203.500-84.500h832q63 0 117 25 15 7 18 23 3 17-9 29l-49 49q-14 14-32 8-23-6-45-6h-832q-66 0-113 47t-47 113v832q0 66 47 113t113 47h832q66 0 113-47t47-113v-126q0-13 9-22l64-64q15-15 35-7t20 29zm-96-738l288 288-672 672h-288v-288zm444 132l-92 92-288-288 92-92q28-28 68-28t68 28l152 152q28 28 28 68t-28 68z"/></svg>
<div class="t " style="left:1385.3px;top:318.3px;color:#fff;font-size:12px">编辑</div>
<div class="ab" style="left:1419px;top:317px;width:45px;background:#ed5565"></div>
<svg class="i" width="9.43" height="12.00" viewBox="0 0 1408 1792" style="left:1425px;top:322px;overflow:visible"><path fill="#fff" d="M1298 1322q0 40-28 68l-136 136q-28 28-68 28t-68-28l-294-294-294 294q-28 28-68 28t-68-28l-136-136q-28-28-28-68t28-68l294-294-294-294q-28-28-28-68t28-68l136-136q28-28 68-28t68 28l294 294 294-294q28-28 68-28t68 28l136 136q28 28 28 68t-28 68l-294 294 294 294q28 28 28 68z"/></svg>
<div class="t " style="left:1434.3px;top:318.3px;color:#fff;font-size:12px">删除</div>
<div class="ab" style="left:1468px;top:317px;width:48px;background:#23c6c8"></div>
<svg class="i" width="11.14" height="12.00" viewBox="0 0 1664 1792" style="left:1474px;top:322px;overflow:visible"><path fill="#fff" d="M832 512q0-80-56-136t-136-56-136 56-56 136q0 42 19 83-41-19-83-19-80 0-136 56t-56 136 56 136 136 56 136-56 56-136q0-42-19-83 41 19 83 19 80 0 136-56t56-136zm851 704q0 17-49 66t-66 49q-9 0-28.500-16t-36.500-33-38.500-40-24.500-26l-96 96 220 220q28 28 28 68 0 42-39 81t-81 39q-40 0-68-28l-671-671q-176 131-365 131-163 0-265.500-102.500t-102.500-265.500q0-160 95-313t248-248 313-95q163 0 265.500 102.500t102.500 265.500q0 189-131 365l355 355 96-96q-3-3-26-24.500t-40-38.500-33-36.500-16-28.500q0-17 49-66t66-49q13 0 23 10 6 6 46 44.500t82 79.500 86.500 86 73 78 28.500 41z"/></svg>
<div class="t " style="left:1485.6px;top:318.3px;color:#fff;font-size:12px">重置</div>
<div class="hline" style="top:392px"></div>
<div class="cb" style="left:427.7px;top:363px"></div>
<div class="t n" style="left:460px;top:361.8px;">8</div>
<div class="t n" style="left:544px;top:361.8px;letter-spacing:0.5px">test2</div>
<div class="t " style="left:679px;top:361.3px;">测试2</div>
<div class="t " style="left:801px;top:361.8px;">-</div>
<div class="t n" style="left:864px;top:361.8px;">15777777777</div>
<div class="t n" style="left:1114px;top:361.8px;">2020-02-23 19:15:07</div>
<div class="sw off" style="left:1040px;top:361.1px"><i></i></div>
<div class="ab" style="left:1367px;top:360px;width:48px;background:#1c84c6"></div>
<svg class="i" width="12.00" height="12.00" viewBox="0 0 1792 1792" style="left:1373px;top:365px;overflow:visible"><path fill="#fff" d="M888 1184l116-116-152-152-116 116v56h96v96h56zm440-720q-16-16-33 1l-350 350q-17 17-1 33t33-1l350-350q17-17 1-33zm80 594v190q0 119-84.500 203.500t-203.500 84.500h-832q-119 0-203.500-84.500t-84.500-203.500v-832q0-119 84.500-203.500t203.500-84.500h832q63 0 117 25 15 7 18 23 3 17-9 29l-49 49q-14 14-32 8-23-6-45-6h-832q-66 0-113 47t-47 113v832q0 66 47 113t113 47h832q66 0 113-47t47-113v-126q0-13 9-22l64-64q15-15 35-7t20 29zm-96-738l288 288-672 672h-288v-288zm444 132l-92 92-288-288 92-92q28-28 68-28t68 28l152 152q28 28 28 68t-28 68z"/></svg>
<div class="t " style="left:1385.3px;top:361.3px;color:#fff;font-size:12px">编辑</div>
<div class="ab" style="left:1419px;top:360px;width:45px;background:#ed5565"></div>
<svg class="i" width="9.43" height="12.00" viewBox="0 0 1408 1792" style="left:1425px;top:365px;overflow:visible"><path fill="#fff" d="M1298 1322q0 40-28 68l-136 136q-28 28-68 28t-68-28l-294-294-294 294q-28 28-68 28t-68-28l-136-136q-28-28-28-68t28-68l294-294-294-294q-28-28-28-68t28-68l136-136q28-28 68-28t68 28l294 294 294-294q28-28 68-28t68 28l136 136q28 28 28 68t-28 68l-294 294 294 294q28 28 28 68z"/></svg>
<div class="t " style="left:1434.3px;top:361.3px;color:#fff;font-size:12px">删除</div>
<div class="ab" style="left:1468px;top:360px;width:48px;background:#23c6c8"></div>
<svg class="i" width="11.14" height="12.00" viewBox="0 0 1664 1792" style="left:1474px;top:365px;overflow:visible"><path fill="#fff" d="M832 512q0-80-56-136t-136-56-136 56-56 136q0 42 19 83-41-19-83-19-80 0-136 56t-56 136 56 136 136 56 136-56 56-136q0-42-19-83 41 19 83 19 80 0 136-56t56-136zm851 704q0 17-49 66t-66 49q-9 0-28.500-16t-36.500-33-38.500-40-24.500-26l-96 96 220 220q28 28 28 68 0 42-39 81t-81 39q-40 0-68-28l-671-671q-176 131-365 131-163 0-265.500-102.500t-102.500-265.500q0-160 95-313t248-248 313-95q163 0 265.500 102.500t102.500 265.500q0 189-131 365l355 355 96-96q-3-3-26-24.500t-40-38.500-33-36.500-16-28.500q0-17 49-66t66-49q13 0 23 10 6 6 46 44.500t82 79.500 86.500 86 73 78 28.500 41z"/></svg>
<div class="t " style="left:1485.6px;top:361.3px;color:#fff;font-size:12px">重置</div>
<div class="hline" style="top:435px"></div>
<div class="cb" style="left:427.7px;top:406px"></div>
<div class="t n" style="left:460px;top:404.8px;">1</div>
<div class="t n" style="left:544px;top:404.8px;letter-spacing:0.8px">admin</div>
<div class="t " style="left:679px;top:404.3px;">超级管理员</div>
<div class="t " style="left:801px;top:404.8px;">-</div>
<div class="t n" style="left:864px;top:404.8px;">15888888888</div>
<div class="t n" style="left:1114px;top:404.8px;">2018-03-16 11:33:00</div>
<div class="sw" style="left:1040px;top:404.1px"><i></i></div>
<div class="ab" style="left:1367px;top:403px;width:48px;background:#1c84c6"></div>
<svg class="i" width="12.00" height="12.00" viewBox="0 0 1792 1792" style="left:1373px;top:408px;overflow:visible"><path fill="#fff" d="M888 1184l116-116-152-152-116 116v56h96v96h56zm440-720q-16-16-33 1l-350 350q-17 17-1 33t33-1l350-350q17-17 1-33zm80 594v190q0 119-84.500 203.500t-203.500 84.500h-832q-119 0-203.500-84.500t-84.500-203.500v-832q0-119 84.500-203.500t203.500-84.500h832q63 0 117 25 15 7 18 23 3 17-9 29l-49 49q-14 14-32 8-23-6-45-6h-832q-66 0-113 47t-47 113v832q0 66 47 113t113 47h832q66 0 113-47t47-113v-126q0-13 9-22l64-64q15-15 35-7t20 29zm-96-738l288 288-672 672h-288v-288zm444 132l-92 92-288-288 92-92q28-28 68-28t68 28l152 152q28 28 28 68t-28 68z"/></svg>
<div class="t " style="left:1385.3px;top:404.3px;color:#fff;font-size:12px">编辑</div>
<div class="ab" style="left:1419px;top:403px;width:45px;background:#ed5565"></div>
<svg class="i" width="9.43" height="12.00" viewBox="0 0 1408 1792" style="left:1425px;top:408px;overflow:visible"><path fill="#fff" d="M1298 1322q0 40-28 68l-136 136q-28 28-68 28t-68-28l-294-294-294 294q-28 28-68 28t-68-28l-136-136q-28-28-28-68t28-68l294-294-294-294q-28-28-28-68t28-68l136-136q28-28 68-28t68 28l294 294 294-294q28-28 68-28t68 28l136 136q28 28 28 68t-28 68l-294 294 294 294q28 28 28 68z"/></svg>
<div class="t " style="left:1434.3px;top:404.3px;color:#fff;font-size:12px">删除</div>
<div class="ab" style="left:1468px;top:403px;width:48px;background:#23c6c8"></div>
<svg class="i" width="11.14" height="12.00" viewBox="0 0 1664 1792" style="left:1474px;top:408px;overflow:visible"><path fill="#fff" d="M832 512q0-80-56-136t-136-56-136 56-56 136q0 42 19 83-41-19-83-19-80 0-136 56t-56 136 56 136 136 56 136-56 56-136q0-42-19-83 41 19 83 19 80 0 136-56t56-136zm851 704q0 17-49 66t-66 49q-9 0-28.500-16t-36.500-33-38.500-40-24.500-26l-96 96 220 220q28 28 28 68 0 42-39 81t-81 39q-40 0-68-28l-671-671q-176 131-365 131-163 0-265.500-102.500t-102.500-265.500q0-160 95-313t248-248 313-95q163 0 265.500 102.500t102.500 265.500q0 189-131 365l355 355 96-96q-3-3-26-24.500t-40-38.500-33-36.500-16-28.500q0-17 49-66t66-49q13 0 23 10 6 6 46 44.500t82 79.500 86.500 86 73 78 28.500 41z"/></svg>
<div class="t " style="left:1485.6px;top:404.3px;color:#fff;font-size:12px">重置</div>
<div class="hline" style="top:478px"></div>
<div class="cb" style="left:427.7px;top:449px"></div>
<div class="t n" style="left:460px;top:447.8px;">2</div>
<div class="t n" style="left:544px;top:447.8px;letter-spacing:0.5px">test1</div>
<div class="t " style="left:679px;top:447.3px;">测试1</div>
<div class="t " style="left:801px;top:447.8px;">-</div>
<div class="t n" style="left:864px;top:447.8px;">15666666666</div>
<div class="t n" style="left:1114px;top:447.8px;">2018-03-16 11:33:00</div>
<div class="sw" style="left:1040px;top:447.1px"><i></i></div>
<div class="ab" style="left:1367px;top:446px;width:48px;background:#1c84c6"></div>
<svg class="i" width="12.00" height="12.00" viewBox="0 0 1792 1792" style="left:1373px;top:451px;overflow:visible"><path fill="#fff" d="M888 1184l116-116-152-152-116 116v56h96v96h56zm440-720q-16-16-33 1l-350 350q-17 17-1 33t33-1l350-350q17-17 1-33zm80 594v190q0 119-84.500 203.500t-203.500 84.500h-832q-119 0-203.500-84.500t-84.500-203.500v-832q0-119 84.500-203.500t203.500-84.500h832q63 0 117 25 15 7 18 23 3 17-9 29l-49 49q-14 14-32 8-23-6-45-6h-832q-66 0-113 47t-47 113v832q0 66 47 113t113 47h832q66 0 113-47t47-113v-126q0-13 9-22l64-64q15-15 35-7t20 29zm-96-738l288 288-672 672h-288v-288zm444 132l-92 92-288-288 92-92q28-28 68-28t68 28l152 152q28 28 28 68t-28 68z"/></svg>
<div class="t " style="left:1385.3px;top:447.3px;color:#fff;font-size:12px">编辑</div>
<div class="ab" style="left:1419px;top:446px;width:45px;background:#ed5565"></div>
<svg class="i" width="9.43" height="12.00" viewBox="0 0 1408 1792" style="left:1425px;top:451px;overflow:visible"><path fill="#fff" d="M1298 1322q0 40-28 68l-136 136q-28 28-68 28t-68-28l-294-294-294 294q-28 28-68 28t-68-28l-136-136q-28-28-28-68t28-68l294-294-294-294q-28-28-28-68t28-68l136-136q28-28 68-28t68 28l294 294 294-294q28-28 68-28t68 28l136 136q28 28 28 68t-28 68l-294 294 294 294q28 28 28 68z"/></svg>
<div class="t " style="left:1434.3px;top:447.3px;color:#fff;font-size:12px">删除</div>
<div class="ab" style="left:1468px;top:446px;width:48px;background:#23c6c8"></div>
<svg class="i" width="11.14" height="12.00" viewBox="0 0 1664 1792" style="left:1474px;top:451px;overflow:visible"><path fill="#fff" d="M832 512q0-80-56-136t-136-56-136 56-56 136q0 42 19 83-41-19-83-19-80 0-136 56t-56 136 56 136 136 56 136-56 56-136q0-42-19-83 41 19 83 19 80 0 136-56t56-136zm851 704q0 17-49 66t-66 49q-9 0-28.500-16t-36.500-33-38.500-40-24.500-26l-96 96 220 220q28 28 28 68 0 42-39 81t-81 39q-40 0-68-28l-671-671q-176 131-365 131-163 0-265.500-102.500t-102.500-265.500q0-160 95-313t248-248 313-95q163 0 265.500 102.500t102.500 265.500q0 189-131 365l355 355 96-96q-3-3-26-24.500t-40-38.500-33-36.500-16-28.500q0-17 49-66t66-49q13 0 23 10 6 6 46 44.500t82 79.500 86.500 86 73 78 28.500 41z"/></svg>
<div class="t " style="left:1485.6px;top:447.3px;color:#fff;font-size:12px">重置</div>
<div class="t " style="left:416px;top:497px;color:#676a6c">第 1 到 4 条，共 4 条记录。</div>
<div class="a" id="foot"></div>
<div class="t n" style="left:1416.5px;top:761.2px;color:#555">© 2020 JAdmins Copyright</div>
</body></html>
